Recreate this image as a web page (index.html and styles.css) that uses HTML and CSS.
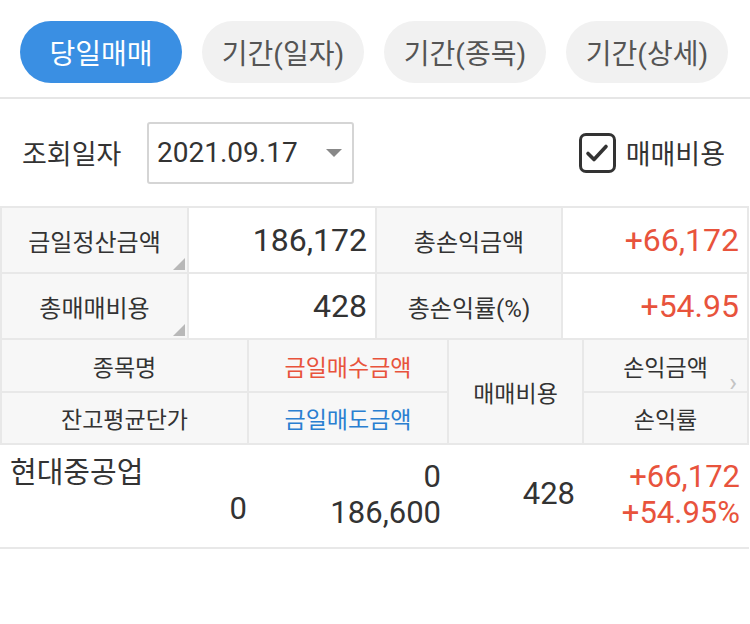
FILE: index.html
```html
<!DOCTYPE html>
<html lang="ko">

<head>
    <meta charset="UTF-8">
    <meta name="viewport" content="width=device-width, initial-scale=1.0">
    <title>당일매매</title>
    <link rel="stylesheet" href="styles.css">
</head>

<body>
    <div class="tabs">
        <button type="button" class="tab active">당일매매</button>
        <button type="button" class="tab">기간(일자)</button>
        <button type="button" class="tab">기간(종목)</button>
        <button type="button" class="tab">기간(상세)</button>
    </div>

    <div class="query">
        <span class="query-label">조회일자</span>
        <div class="date-select">
            <span>2021.09.17</span>
            <span class="caret"></span>
        </div>
        <label class="fee-check">
            <span class="box">
                <svg width="28" height="28" viewBox="0 0 28 28">
                    <path d="M5 14.5 L11 20.5 L23 7.5" fill="none" stroke="#333" stroke-width="3.6"
                        stroke-linecap="round" stroke-linejoin="round" />
                </svg>
            </span>
            매매비용
        </label>
    </div>

    <table class="summary">
        <tr>
            <th><span class="corner"></span>금일정산금액</th>
            <td>186,172</td>
            <th>총손익금액</th>
            <td class="up">+66,172</td>
        </tr>
        <tr>
            <th><span class="corner"></span>총매매비용</th>
            <td>428</td>
            <th>총손익률(%)</th>
            <td class="up">+54.95</td>
        </tr>
    </table>

    <table class="list-head">
        <tr>
            <th class="c1">종목명</th>
            <th class="c2 buy">금일매수금액</th>
            <th class="c3" rowspan="2">매매비용</th>
            <th class="c4">손익금액</th>
        </tr>
        <tr>
            <th>잔고평균단가</th>
            <th class="sell">금일매도금액</th>
            <th>손익률<span class="more">›</span></th>
        </tr>
    </table>

    <div class="item">
        <div class="col name-col">
            <span class="stock">현대중공업</span>
            <span>0</span>
        </div>
        <div class="col amount-col">
            <span>0</span>
            <span>186,600</span>
        </div>
        <div class="col mid">
            <span>428</span>
        </div>
        <div class="col up">
            <span>+66,172</span>
            <span>+54.95%</span>
        </div>
    </div>
</body>

</html>
```

FILE: styles.css
```css
* {
    padding: 0;
    margin: 0;
    box-sizing: border-box;
    font-family: 'Roboto', 'Noto Sans CJK KR', sans-serif;
    font-weight: 400;
}

body {
    background: #ffffff;
    width: 750px;
    color: #333;
}

/* top tabs */
.tabs {
    display: flex;
    gap: 20px;
    padding: 21px 22px 14px 20px;
    border-bottom: 2px solid #e6e6e6;
}

.tab {
    width: 162px;
    height: 62px;
    border: none;
    border-radius: 31px;
    background: #f1f1f1;
    color: #555;
    font-size: 28px;
    cursor: pointer;
}

.tab.active {
    background: #3a8fe3;
    color: #fff;
}

/* query row */
.query {
    display: flex;
    align-items: center;
    height: 107px;
    padding: 0 25px 0 22px;
}

.query-label {
    font-size: 27px;
    color: #333;
    width: 125px;
}

.date-select {
    width: 207px;
    height: 62px;
    border: 2px solid #d5d5d5;
    border-radius: 3px;
    display: flex;
    align-items: center;
    justify-content: space-between;
    padding: 0 9px 0 8px;
    font-size: 28px;
    color: #333;
}

.caret {
    width: 0;
    height: 0;
    border-left: 8px solid transparent;
    border-right: 8px solid transparent;
    border-top: 8px solid #888;
    margin-right: 1px;
}

.fee-check {
    margin-left: auto;
    display: flex;
    align-items: center;
    gap: 10px;
    font-size: 27px;
    color: #333;
}

.box {
    width: 37px;
    height: 40px;
    border: 3px solid #333;
    border-radius: 7px;
    display: flex;
    align-items: center;
    justify-content: center;
}

/* summary table */
table {
    border-collapse: collapse;
    width: 749px;
    table-layout: fixed;
}

.summary th,
.summary td {
    height: 66px;
    border: 2px solid #e8e8e8;
    font-size: 24px;
    font-weight: 400;
}

.summary th {
    background: #f7f7f7;
    color: #333;
    position: relative;
}

.summary th:nth-child(1) {
    width: 187px;
}

.summary td:nth-child(2) {
    width: 188px;
}

.summary th:nth-child(3) {
    width: 186px;
}

.summary td {
    text-align: right;
    padding-right: 8px;
    font-size: 32px;
    color: #333;
}

.corner {
    position: absolute;
    right: 2px;
    bottom: 2px;
    width: 0;
    height: 0;
    border-left: 12px solid transparent;
    border-bottom: 12px solid #b8b8b8;
}

.up {
    color: #e8533c !important;
}

/* list header */
.list-head th {
    height: 52px;
    border: 2px solid #e8e8e8;
    border-top: none;
    background: #f7f7f7;
    font-size: 23px;
    font-weight: 400;
    color: #333;
    position: relative;
}

.list-head .c1 {
    width: 247px;
}

.list-head .c2 {
    width: 200px;
}

.list-head .c3 {
    width: 135px;
}

.list-head .buy {
    color: #e8533c;
}

.list-head .sell {
    color: #2a7fd1;
}

.more {
    position: absolute;
    right: 10px;
    top: -26px;
    color: #c4c4c4;
    font-size: 26px;
}

/* item row */
.item {
    display: grid;
    grid-template-columns: 247px 200px 135px 1fr;
    height: 104px;
    border-bottom: 2px solid #e8e8e8;
    width: 749px;
}

.col {
    display: flex;
    flex-direction: column;
    align-items: flex-end;
    padding: 14px 9px 0 0;
    font-size: 31px;
    line-height: 36px;
    color: #333;
}

.col.mid {
    justify-content: center;
    padding: 0 7px 4px 0;
}

.name-col {
    padding: 10px 0 0 0;
}

.amount-col {
    padding-right: 6px;
}

.stock {
    align-self: flex-start;
    margin-left: 10px;
    margin-bottom: 0;
    font-size: 29px;
}
```
